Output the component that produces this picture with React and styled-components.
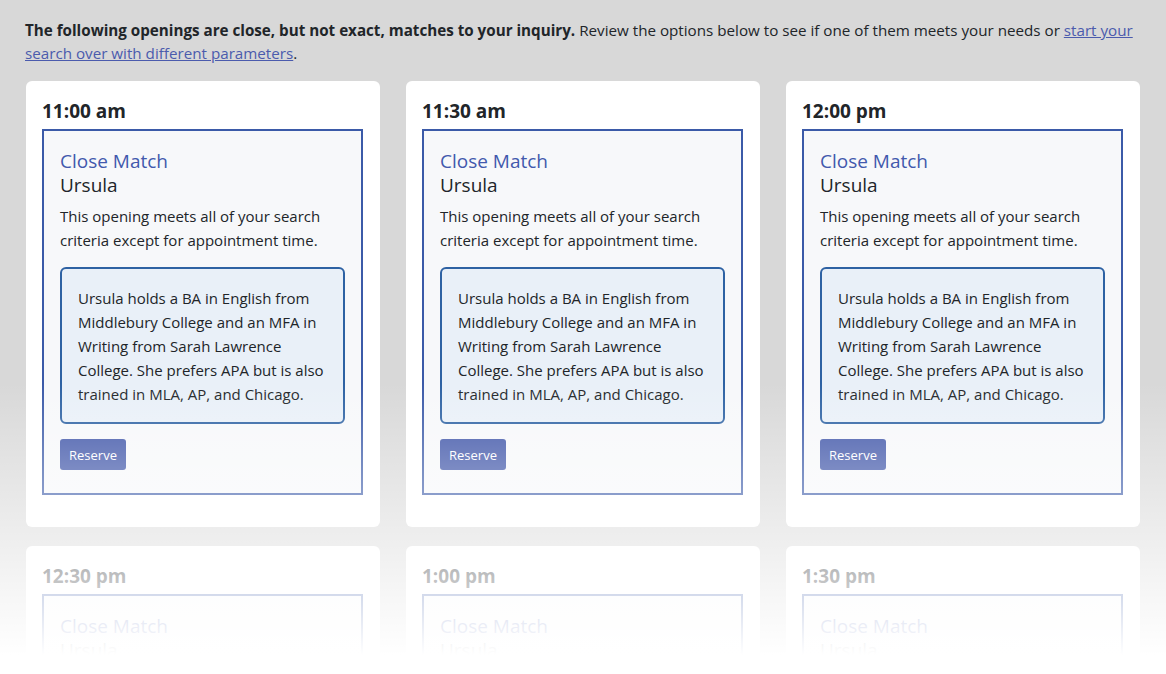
import styled, { createGlobalStyle } from "styled-components";

const GlobalStyle = createGlobalStyle`
	html, body {
		margin: 0;
		padding: 0;
		height: 100%;
		overflow: hidden;
	}
	body {
		background: #d8d8d8;
		font-family: "Open Sans", "Noto Sans", sans-serif;
		color: #212529;
	}
`;

const Page = styled.div`
	position: relative;
	height: 674px;
	padding: 19px 25px 0 25px;
	box-sizing: border-box;
	overflow: hidden;
`;

const Fade = styled.div`
	position: absolute;
	inset: 0;
	pointer-events: none;
	background: linear-gradient(
		to bottom,
		rgba(255, 255, 255, 0) 383px,
		rgba(255, 255, 255, 1) 655px
	);
`;

const Intro = styled.p`
	margin: 0 0 16px 0;
	font-size: 15.2px;
	line-height: 23px;
	strong {
		font-weight: 700;
	}
	a {
		color: #4b5bad;
		text-decoration: underline;
	}
`;

const Grid = styled.div`
	display: grid;
	grid-template-columns: repeat(3, 354px);
	column-gap: 26px;
	row-gap: 19px;
	padding-left: 1px;
`;

const Card = styled.div`
	background: #fff;
	border-radius: 6px;
	padding: 16px 17px 32px 16px;
`;

const Time = styled.h3`
	margin: 0 0 4px 0;
	font-size: 19px;
	line-height: 28px;
	font-weight: 700;
`;

const MatchBox = styled.div`
	border: 2px solid #3b5aa8;
	background: #f7f8fa;
	padding: 18px 16px 23px 16px;
`;

const MatchTitle = styled.div`
	font-size: 19px;
	line-height: 24px;
	color: #4259ad;
`;

const Tutor = styled.div`
	font-size: 19px;
	line-height: 24px;
`;

const Desc = styled.p`
	margin: 7px 0 15px 0;
	font-size: 15px;
	line-height: 24px;
`;

const Bio = styled.div`
	border: 2px solid #2e62a3;
	border-radius: 6px;
	background: #e9f0f8;
	padding: 17px 16px 16px 16px;
	font-size: 15px;
	line-height: 24px;
`;

const ReserveButton = styled.button`
	margin-top: 15px;
	height: 31px;
	padding: 0 9px;
	border: none;
	border-radius: 3px;
	background: #3f55a8;
	color: #fff;
	font-family: inherit;
	font-size: 13px;
	cursor: pointer;
`;

const times = ["11:00 am", "11:30 am", "12:00 pm", "12:30 pm", "1:00 pm", "1:30 pm"];

const Opening = ({ time }) => (
	<Card>
		<Time>{time}</Time>
		<MatchBox>
			<MatchTitle>Close Match</MatchTitle>
			<Tutor>Ursula</Tutor>
			<Desc>This opening meets all of your search criteria except for appointment time.</Desc>
			<Bio>
				Ursula holds a BA in English from Middlebury College and an MFA in Writing from Sarah
				Lawrence College. She prefers APA but is also trained in MLA, AP, and Chicago.
			</Bio>
			<ReserveButton type="button">Reserve</ReserveButton>
		</MatchBox>
	</Card>
);

export default function App() {
	return (
		<>
			<GlobalStyle />
			<Page>
				<Intro>
					<strong>The following openings are close, but not exact, matches to your inquiry.</strong>{" "}
					Review the options below to see if one of them meets your needs or{" "}
					<a href="#">start your search over with different parameters</a>.
				</Intro>
				<Grid>
					{times.map((t) => (
						<Opening key={t} time={t} />
					))}
				</Grid>
				<Fade />
			</Page>
		</>
	);
}
